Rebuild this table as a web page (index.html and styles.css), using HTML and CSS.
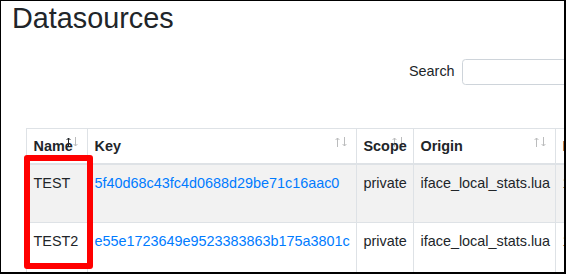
FILE: index.html
```html
<!DOCTYPE html>
<html lang="en">
<head>
<meta charset="utf-8">
<title>Datasources</title>
<link rel="stylesheet" href="styles.css">
</head>
<body>
<div class="frame">
  <div class="page">
    <h2 class="title">Datasources</h2>
    <div class="toolbar">
      <label class="search-label">Search<input class="search-input" type="search"></label>
    </div>
    <div class="table-wrap">
      <table class="ds-table">
        <colgroup>
          <col class="c-name"><col class="c-key"><col class="c-scope"><col class="c-origin"><col class="c-ret">
        </colgroup>
        <thead>
          <tr>
            <th>Name<svg class="sort-up active" viewBox="0 0 5 10"><path d="M2.5 10V1M0.6 3L2.5 1L4.4 3"/></svg><svg class="sort-down" viewBox="0 0 5 10"><path d="M2.5 0V9M0.6 7L2.5 9L4.4 7"/></svg></th>
            <th>Key<svg class="sort-up" viewBox="0 0 5 10"><path d="M2.5 10V1M0.6 3L2.5 1L4.4 3"/></svg><svg class="sort-down" viewBox="0 0 5 10"><path d="M2.5 0V9M0.6 7L2.5 9L4.4 7"/></svg></th>
            <th>Scope<svg class="sort-up" viewBox="0 0 5 10"><path d="M2.5 10V1M0.6 3L2.5 1L4.4 3"/></svg><svg class="sort-down" viewBox="0 0 5 10"><path d="M2.5 0V9M0.6 7L2.5 9L4.4 7"/></svg></th>
            <th>Origin<svg class="sort-up" viewBox="0 0 5 10"><path d="M2.5 10V1M0.6 3L2.5 1L4.4 3"/></svg><svg class="sort-down" viewBox="0 0 5 10"><path d="M2.5 0V9M0.6 7L2.5 9L4.4 7"/></svg></th>
            <th>Data Retention<svg class="sort-up" viewBox="0 0 5 10"><path d="M2.5 10V1M0.6 3L2.5 1L4.4 3"/></svg><svg class="sort-down" viewBox="0 0 5 10"><path d="M2.5 0V9M0.6 7L2.5 9L4.4 7"/></svg></th>
          </tr>
        </thead>
        <tbody>
          <tr class="odd">
            <td>TEST</td>
            <td><a class="key-link" href="#">5f40d68c43fc4d0688d29be71c16aac0</a></td>
            <td>private</td>
            <td>iface_local_stats.lua</td>
            <td>1 Day</td>
          </tr>
          <tr class="even">
            <td>TEST2</td>
            <td><a class="key-link" href="#">e55e1723649e9523383863b175a3801c</a></td>
            <td>private</td>
            <td>iface_local_stats.lua</td>
            <td>1 Day</td>
          </tr>
        </tbody>
      </table>
    </div>
  </div>
  <div class="highlight"></div>
</div>
</body>
</html>
```

FILE: styles.css
```css
* { box-sizing: border-box; }

html, body {
  margin: 0;
  padding: 0;
  background: #ffffff;
}

body {
  font-family: "Liberation Sans", Arial, sans-serif;
  font-size: 14.4px;
  line-height: 1.5;
  color: #212529;
}

.frame {
  position: relative;
  width: 566px;
  height: 274px;
  overflow: hidden;
  border-style: solid;
  border-color: #000000;
  border-width: 1px 2px 2px 1px;
}

.page {
  width: 700px;
  padding: 0 0 0 11px;
}

.title {
  margin: 0;
  font-size: 28.8px;
  font-weight: 400;
  line-height: 1.2;
  color: #212529;
}

.toolbar {
  display: flex;
  align-items: center;
  margin-top: 23px;
  padding-left: 397px;
}

.search-label {
  display: flex;
  align-items: center;
  gap: 7px;
  white-space: nowrap;
}

.search-input {
  width: 170px;
  height: 26px;
  border: 1px solid #ced4da;
  border-radius: 3.6px;
  background: #ffffff;
  font: inherit;
  padding: 0 8px;
}

.table-wrap {
  margin-top: 43px;
  margin-left: 14px;
}

.ds-table {
  border-collapse: separate;
  border-spacing: 0;
  table-layout: fixed;
  width: 649px;
}

.c-name { width: 61px; }
.c-key { width: 269px; }
.c-scope { width: 57px; }
.c-origin { width: 142px; }
.c-ret { width: 120px; }

.ds-table th,
.ds-table td {
  text-align: left;
  white-space: nowrap;
  overflow: visible;
  border-left: 1px solid #dee2e6;
  padding: 0 6.5px;
}

.ds-table th {
  position: relative;
  font-weight: 700;
  height: 37px;
  padding-top: 7px;
  vertical-align: top;
  border-top: 1px solid #dee2e6;
  border-bottom: 2px solid #dee2e6;
}

.ds-table td {
  vertical-align: top;
  padding-top: 8px;
}

.ds-table tbody tr.odd td {
  height: 57px;
  background: #f2f2f2;
}

.ds-table tbody tr.even td {
  height: 58px;
  padding-top: 8px;
  border-top: 1px solid #dee2e6;
}

.key-link {
  color: #007bff;
  text-decoration: none;
}

.sort-up,
.sort-down {
  position: absolute;
  top: 8px;
  width: 5px;
  height: 10px;
  fill: none;
  stroke: #212529;
  stroke-width: 1;
  opacity: 0.3;
}

.sort-up { right: 16px; }
.sort-down { right: 9px; }
.sort-up.active { opacity: 1; }

.highlight {
  position: absolute;
  left: 23px;
  top: 154px;
  width: 69px;
  height: 114px;
  border: 6px solid #ff0000;
  border-radius: 3px;
}
```
